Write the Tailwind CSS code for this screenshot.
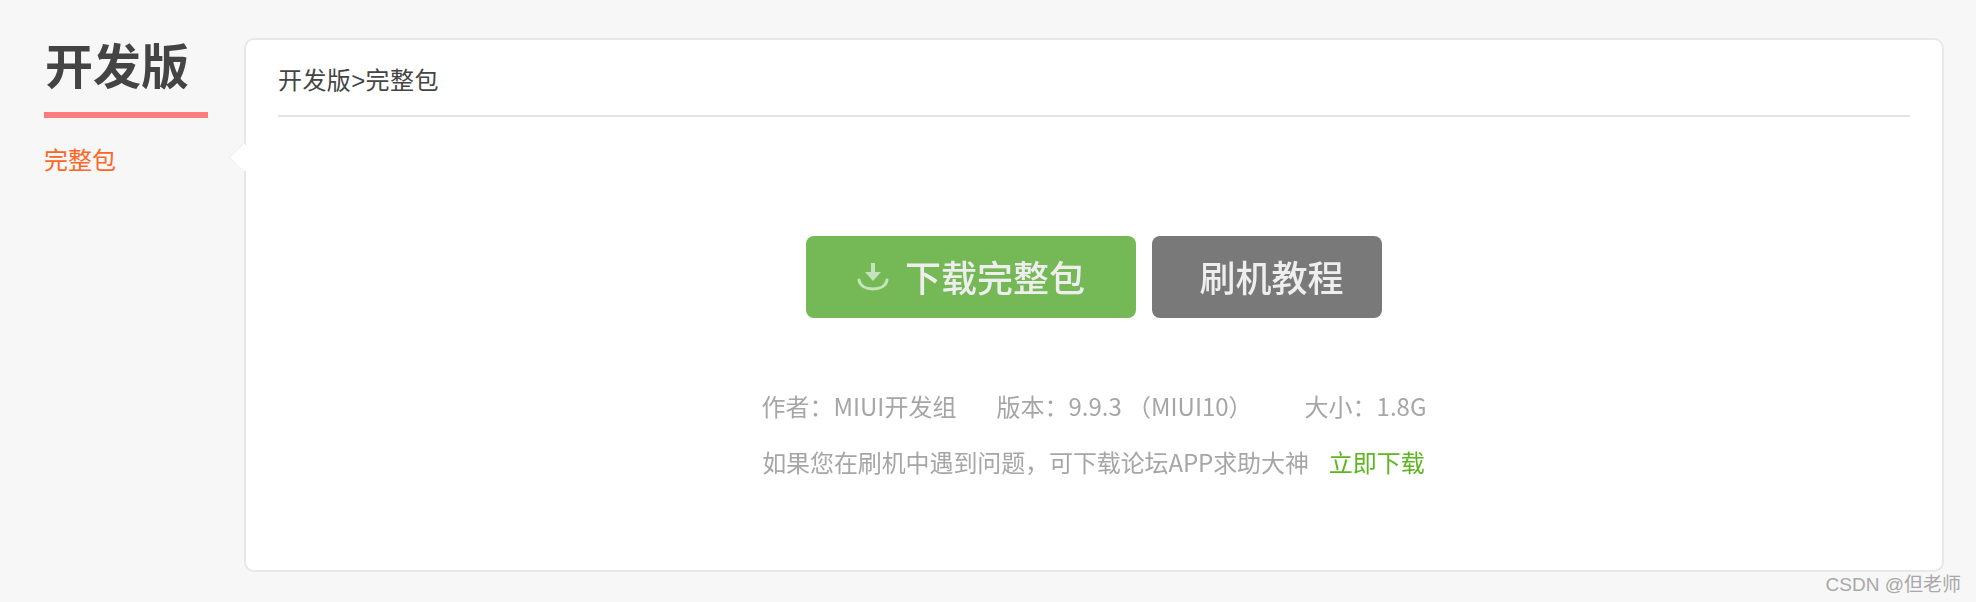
<!DOCTYPE html>
<html lang="zh">
<head>
    <meta charset="UTF-8">
    <title>开发版</title>
    <script src="https://cdn.jsdelivr.net/npm/@tailwindcss/browser@4"></script>
</head>
<body class="h-[602px] overflow-hidden bg-[#f7f7f7] font-['Noto_Sans_CJK_SC','Liberation_Sans',sans-serif]">
    <div class="flex pl-[44px] pt-[38px]">
        <!-- sidebar -->
        <div class="w-[164px] shrink-0">
            <h1 class="border-b-[6px] border-[#ff7a7c] pb-[24px] pl-[1px] text-[48px] leading-[50px] font-bold text-[#444] blur-[0.3px]">开发版</h1>
            <div class="mt-[24px] text-[24px] leading-[34px] text-[#ff6525]">完整包</div>
        </div>
        <!-- main card -->
        <div class="relative ml-[36px] h-[534px] w-[1700px] rounded-[10px] border-2 border-[#e8e8e8] bg-white px-[32px]">
            <div class="absolute left-[-13px] top-[107px] h-[21px] w-[21px] rotate-45 border-b border-l border-[#eee] bg-white"></div>
            <div class="relative border-b-2 border-[#e4e4e4] pb-[19px] pt-[25px] font-['Liberation_Sans','Noto_Sans_CJK_SC',sans-serif] text-[24px] leading-[31px] tracking-[0.4px] text-[#444]">开发版&gt;完整包</div>
            <div class="mt-[119px] flex justify-center gap-[16px] text-[36px] font-medium text-[#eee] blur-[0.7px]">
                <a class="flex h-[82px] w-[330px] items-center justify-center rounded-[8px] bg-[#74b955] pb-[2px]">
                    <svg class="mr-[16px] h-[32px] w-[32px] opacity-60" viewBox="0 0 32 32" fill="none" stroke="#fff" stroke-width="3">
                        <path d="M16 3v11" stroke-width="4"/>
                        <path d="M8 12h16l-8 9z" fill="#fff" stroke="none"/>
                        <path d="M2 20c1 6 7 9 14 9s13-3 14-9" stroke-linecap="round"/>
                    </svg>
                    下载完整包
                </a>
                <a class="flex h-[82px] w-[230px] items-center justify-center rounded-[8px] bg-[#797979] pb-[2px] pl-[9px]">刷机教程</a>
            </div>
            <div class="mt-[71px] flex justify-center text-[24px] leading-[34px] text-[#a6a6a6] blur-[0.4px]">
                <span>作者：MIUI开发组</span>
                <span class="ml-[40px]">版本：9.9.3 （MIUI10）</span>
                <span class="ml-[52px]">大小：1.8G</span>
            </div>
            <div class="mt-[22px] flex justify-center pr-[1px] text-[24px] leading-[34px] text-[#a6a6a6] blur-[0.4px]">
                <span class="tracking-[-0.1px]">如果您在刷机中遇到问题，可下载论坛APP求助大神</span>
                <a class="ml-[20px] text-[#5db61e]">立即下载</a>
            </div>
        </div>
    </div>
    <div class="absolute right-[15px] top-[571px] font-['Liberation_Sans','Noto_Sans_CJK_SC',sans-serif] text-[19px] leading-[28px] text-[#a8a8a8]">CSDN @但老师</div>
</body>
</html>
